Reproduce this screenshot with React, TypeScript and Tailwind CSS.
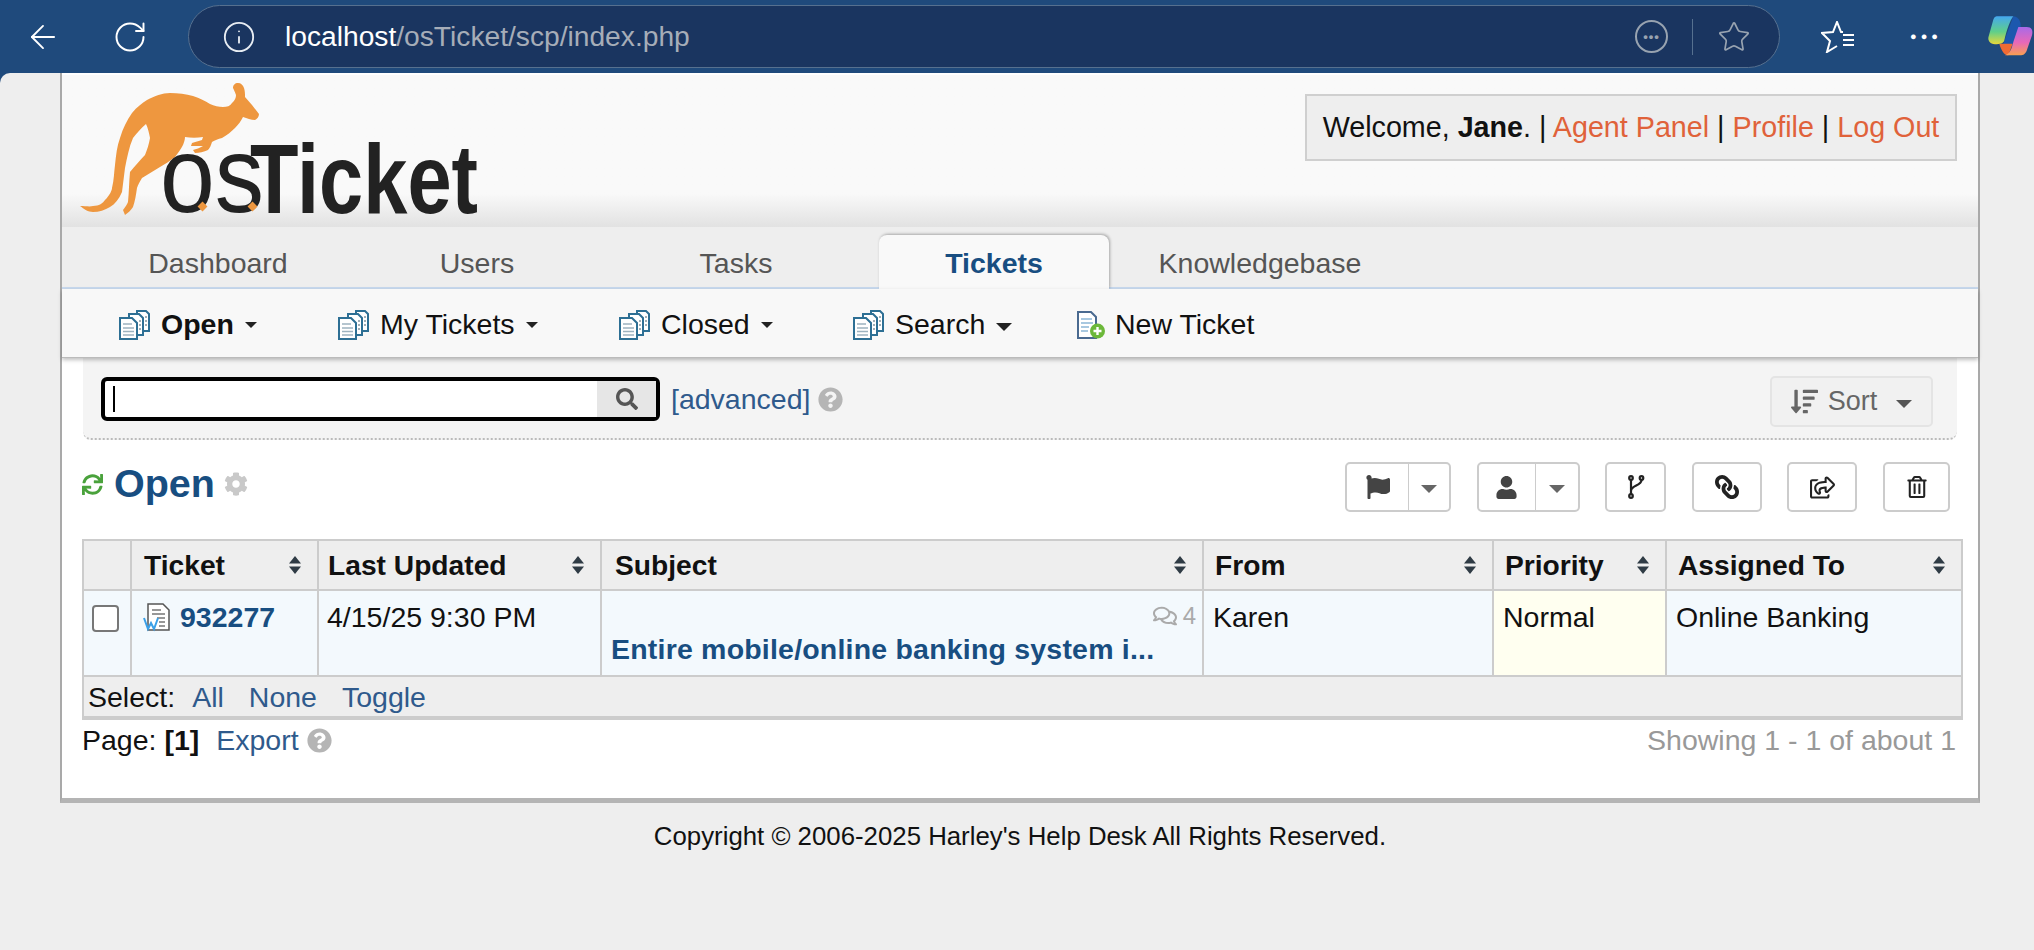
import { ArrowLeft, Info, RotateCw, Star } from "lucide-react";
import { FaCog, FaFlag, FaLink, FaQuestionCircle, FaRegComments, FaRegShareSquare, FaRegTrashAlt, FaSearch, FaSortAmountDown, FaSync, FaUser } from "react-icons/fa";

const columns = [
    { label: "", width: "w-[48px]", pad: "" },
    { label: "Ticket", width: "w-[187px]", pad: "pl-[12px]" },
    { label: "Last Updated", width: "w-[283px]", pad: "pl-[9px]" },
    { label: "Subject", width: "w-[602px]", pad: "pl-[13px]" },
    { label: "From", width: "w-[290px]", pad: "pl-[11px]" },
    { label: "Priority", width: "w-[173px]", pad: "pl-[11px]" },
    { label: "Assigned To", width: "w-[296px]", pad: "pl-[11px]" },
];

// Small stack-of-pages icon used in the sub navigation
function PagesIcon() {
    return (
        <svg width="33" height="31" viewBox="0 0 33 31" className="shrink-0">
            <path d="M19 2h9l3 3v17H19z" fill="#fff" stroke="#2d6f94" strokeWidth="2" />
            <path d="M11 5h10l4 4v17H11z" fill="#fff" stroke="#2d6f94" strokeWidth="2" />
            <path d="M2 9h12l5 5v16H2z" fill="#fff" stroke="#2d6f94" strokeWidth="2" />
            <path d="M5 15h9M5 19h11M5 22.500h11M5 26h11" stroke="#9db3c0" strokeWidth="1.5" />
            <path d="M21 12h2M21 16h2M21 20h2M27 8h2M27 12h2M27 16h2" stroke="#47606e" strokeWidth="1.2" />
        </svg>
    );
}

function SortArrows() {
    return (
        <svg width="14" height="20" viewBox="0 0 14 20" className="shrink-0">
            <path d="M7 1l6 7.5H1z" fill="#2f3b45" />
            <path d="M7 19l6-7.5H1z" fill="#2f3b45" />
        </svg>
    );
}

function Caret({ className }: { className: string }) {
    return <span className={`inline-block border-x-[6px] border-t-[6px] border-x-transparent ${className}`} />;
}

function ForkIcon() {
    return (
        <svg width="18" height="24" viewBox="0 0 18 24" fill="none" stroke="#222" strokeWidth="2.2">
            <circle cx="4" cy="3" r="1.800" />
            <circle cx="14.500" cy="3" r="1.800" />
            <circle cx="4" cy="21" r="1.800" />
            <path d="M4 5v14M14.500 5c0 6-10.500 5-10.500 11" />
        </svg>
    );
}

function Logo() {
    return (
        <svg width="400" height="136" viewBox="80 81 400 136" className="shrink-0 overflow-visible">
            <path
                fill="#ee973f"
                d="M80 206C85 206 90 207 93 206C99 206 103 203 105 200C110 195 112 190 112 188C114 180 114 172 115 165C116 155 117 146 120 138C123 128 127 120 132 113C137 107 142 103 147 100C155 96 162 93 170 93C178 93 186 94 193 96C200 98 205 101 210 104C214 106 219 107 223 107C227 107 230 106 232 103C235 100 236 98 236 95C235 92 234 90 233 88C233 85 235 83 238 83C241 83 243 85 244 88C245 91 245 94 245 97L252 105L259 114C259 117 257 119 255 120C251 120 247 118 243 117C241 121 238 125 235 128C231 132 227 135 222 138C218 139 215 140 212 142C211 145 210 148 208 150C204 152 199 153 195 153L193 150C196 149 200 148 203 146L191 146L192 143C195 142 199 141 202 140L203 137C197 138 191 138 185 137C185 140 184 142 183 145C181 149 178 153 175 157C170 161 165 164 160 167C154 171 148 174 142 178C140 181 138 185 137 188C136 195 135 201 133 207C131 210 128 213 125 215L123 210C125 207 127 205 128 202C129 192 129 182 130 172C135 166 140 160 145 155C147 150 149 144 150 138C149 133 148 128 146 124C141 128 137 133 133 138C129 147 127 158 125 168C124 176 123 184 122 192C119 199 115 204 110 207C105 210 99 212 93 212C88 212 84 209 80 206Z"
            />
            <text x="160" y="212" fontFamily="'Liberation Sans', sans-serif" fontSize="108" fill="#222" textLength="104" lengthAdjust="spacingAndGlyphs">os</text>
            <rect x="199" y="203" width="7" height="7" fill="#ee973f" transform="rotate(45 202.500 206.500)" />
            <rect x="249" y="203" width="7" height="7" fill="#ee973f" transform="rotate(45 252.500 206.500)" />
            <text x="250" y="213" fontFamily="'Liberation Sans', sans-serif" fontWeight="700" fontSize="98" fill="#222" textLength="228" lengthAdjust="spacingAndGlyphs">Ticket</text>
        </svg>
    );
}

function CopilotLogo() {
    return (
        <svg width="64" height="60" viewBox="0 0 192 180">
            <defs>
                <linearGradient id="cpa" x1="0" y1="0" x2="0" y2="1">
                    <stop offset="0" stopColor="#45a8ee" />
                    <stop offset="0.55" stopColor="#5fcf8a" />
                    <stop offset="1" stopColor="#e8d83a" />
                </linearGradient>
                <linearGradient id="cpb" x1="0" y1="0" x2="0" y2="1">
                    <stop offset="0" stopColor="#a86ae8" />
                    <stop offset="0.55" stopColor="#e868b8" />
                    <stop offset="1" stopColor="#f8a050" />
                </linearGradient>
            </defs>
            <path d="M130 28C150 30 155 50 150 70L130 120L100 110Z" fill="#1c58ae" />
            <path d="M88 110H128L115 145C105 145 95 135 88 110Z" fill="#ee6a34" />
            <path d="M80 28H130C120 40 110 70 103 100C100 110 90 112 75 112C60 112 52 100 56 88L68 45C70 35 74 28 80 28Z" fill="url(#cpa)" />
            <path d="M145 60H170C185 60 190 70 186 85L172 125C168 140 160 145 150 145H105C120 140 125 125 130 105L140 75Z" fill="url(#cpb)" />
        </svg>
    );
}

function BrowserBar() {
    return (
        <div className="h-[73px] flex items-center bg-[#1f4a7c] text-white">
            <ArrowLeft size={38} strokeWidth={1.2} className="ml-[24px] shrink-0" />
            <RotateCw size={36} strokeWidth={1.3} className="ml-[50px] shrink-0" />
            <div className="ml-[40px] w-[1592px] h-[63px] flex items-center rounded-full border border-[#56708f] bg-[#1a3560] pl-[33px] pr-[28px]">
                <Info size={34} strokeWidth={1.3} className="shrink-0 text-[#e8edf3]" />
                <span className="ml-[29px] text-[28.2px] text-[#a6adb8]">
                    <span className="text-white">localhost</span>/osTicket/scp/index.php
                </span>
                <div className="ml-auto flex items-center">
                    <span className="w-[33px] h-[33px] rounded-full border-2 border-[#98a3b0] flex items-center justify-center text-[#98a3b0] text-[13px] leading-none tracking-[1px] font-bold">•••</span>
                    <span className="ml-[24px] w-px h-[36px] bg-[#56708f]" />
                    <Star size={34} strokeWidth={1.2} className="ml-[24px] text-[#98a3b0]" />
                </div>
            </div>
            <div className="ml-[41px] flex-1 flex items-center">
                <svg width="34" height="32" viewBox="0 0 34 32" fill="none" stroke="#fff" strokeWidth="2">
                    <path d="M22 11h-2L16 1l-4 10-11 1 8 8-3 11 10-6" />
                    <path d="M22 14h11M22 19h11M22 24h11" />
                </svg>
                <span className="ml-[55px] text-[11px] leading-none tracking-[4px]">●●●</span>
                <span className="ml-auto"><CopilotLogo /></span>
            </div>
        </div>
    );
}

function NavItem({ label, className, bold, caret = "border-t-[#222]" }: { label: string; className: string; bold?: boolean; caret?: string }) {
    return (
        <div className={`flex items-center ${className}`}>
            <PagesIcon />
            <span className={`ml-[10px] text-[28.5px] ${bold ? "font-bold" : ""}`}>{label}</span>
            <Caret className={`ml-[11px] ${caret}`} />
        </div>
    );
}

function ActionButton({ children, className }: { children: React.ReactNode; className: string }) {
    return (
        <div className={`h-[50px] flex items-center justify-center rounded-[5px] border-2 border-[#ccc] bg-white text-[#222] ${className}`}>
            {children}
        </div>
    );
}

function SplitButton({ children, className, first, second }: { children: React.ReactNode; className: string; first: string; second: string }) {
    return (
        <div className={`h-[50px] flex rounded-[5px] border-2 border-[#ccc] bg-white text-[#444] ${className}`}>
            <div className={`flex items-center justify-center border-r border-[#ccc] ${first}`}>{children}</div>
            <div className={`flex items-center justify-center pt-[4px] ${second}`}><Caret className="border-t-[#666] border-x-[8px] border-t-[8px]" /></div>
        </div>
    );
}

export default function App() {
    return (
        <div className="h-[950px] overflow-hidden bg-[#1f4a7c] font-['Liberation_Sans',sans-serif] text-[#111]">
            <BrowserBar />

            <div className="h-[877px] bg-[#eeeeee] rounded-tl-[10px] overflow-hidden">
                <div className="ml-[60px] w-[1920px] h-[730px] bg-white border-x-2 border-b-[5px] border-[#b4b4b4] border-x-[#a9a9a9]">

                    {/* header */}
                    <div className="h-[154px] flex items-start justify-between pl-[18px] pr-[21px] bg-gradient-to-b from-[#f9f9f9] from-[78%] to-[#e2e2e2] border-t-2 border-white">
                        <div className="mt-[6px]"><Logo /></div>
                        <div className="mt-[19px] h-[67px] w-[652px] flex items-center justify-center bg-[#eeeeee] border-2 border-[#cfcfcf] text-[28.7px] whitespace-nowrap">
                            <span>Welcome, <b>Jane</b>. | <a className="text-[#e0623a]">Agent Panel</a> | <a className="text-[#e0623a]">Profile</a> | <a className="text-[#e0623a]">Log Out</a></span>
                        </div>
                    </div>

                    {/* tabs */}
                    <div className="h-[62px] flex items-end gap-[27px] pl-[40px] bg-[#eeeeee] border-b-2 border-[#c8d9ee] text-[28.5px] text-[#555]">
                        <div className="w-[232px] h-[47px] flex items-center justify-center">Dashboard</div>
                        <div className="w-[232px] h-[47px] flex items-center justify-center">Users</div>
                        <div className="w-[232px] h-[47px] flex items-center justify-center">Tasks</div>
                        <div className="w-[230px] mr-[2px] h-[54px] -mb-[2px] pt-[3px] flex items-center justify-center rounded-t-[8px] bg-[#f9f9f9] font-bold text-[#184e81] shadow-[1px_-1px_3px_rgba(0,0,0,0.3)]">Tickets</div>
                        <div className="w-[244px] h-[47px] flex items-center justify-center">Knowledgebase</div>
                    </div>

                    {/* sub navigation */}
                    <div className="relative h-[69px] flex items-center pl-[56px] pt-[3px] bg-[#f8f8f8] border-b border-[#bbb] shadow-[0_2px_4px_rgba(0,0,0,0.25)]">
                        <NavItem label="Open" bold className="w-[219px]" />
                        <NavItem label="My Tickets" className="w-[281px]" />
                        <NavItem label="Closed" className="w-[234px]" />
                        <NavItem label="Search" caret="border-x-[8px] border-t-[8px] mt-[5px] border-t-[#222]" className="w-[224px]" />
                        <div className="flex items-center">
                            <svg width="30" height="30" viewBox="0 0 30 30" className="shrink-0">
                                <path d="M2 2h13l5 5v21H2z" fill="#fff" stroke="#4a6a90" strokeWidth="2" />
                                <path d="M5 9h11M5 13h12M5 17h8M5 21h7" stroke="#a8c8e0" strokeWidth="1.8" />
                                <circle cx="21.500" cy="21" r="7.500" fill="#6cb83a" />
                                <path d="M21.500 17v8M17.500 21h8" stroke="#fff" strokeWidth="2.4" />
                            </svg>
                            <span className="ml-[9px] text-[28.5px]">New Ticket</span>
                        </div>
                    </div>

                    {/* search panel */}
                    <div className="mx-[21px] h-[82px] flex items-start justify-between pl-[18px] pr-[24px] pt-[19px] bg-[#f4f4f4] border-b-2 border-dotted border-[#bbb] rounded-b-[8px]">
                        <div className="flex items-center">
                            <div className="w-[559px] h-[44px] flex items-stretch justify-between rounded-[6px] border-[4px] border-black bg-white">
                                <span className="ml-[8px] my-[5px] w-[2px] bg-black" />
                                <div className="w-[59px] flex items-center justify-center bg-[#e6e6e6] text-[#555]"><FaSearch size={22} /></div>
                            </div>
                            <a className="ml-[11px] text-[28.5px] text-[#2f5a8c]">[advanced]</a>
                            <FaQuestionCircle size={25} className="ml-[8px] text-[#b5b5b5]" />
                        </div>
                        <div className="-mt-[1px] w-[163px] h-[51px] flex items-center justify-center rounded-[5px] border-2 border-[#e4e4e4] bg-[#f1f1f1] text-[#666] text-[27px]">
                            <FaSortAmountDown size={27} />
                            <span className="ml-[10px]">Sort</span>
                            <Caret className="ml-[19px] mt-[5px] border-t-[#555] border-x-[8px] border-t-[8px]" />
                        </div>
                    </div>

                    {/* title + actions */}
                    <div className="h-[99px] flex items-start justify-between pl-[20px] pr-[28px] pt-[22px]">
                        <div className="flex items-center h-[44px]">
                            <FaSync size={21} className="text-[#4aa23c]" />
                            <span className="ml-[11px] text-[39.5px] font-bold text-[#184e81]">Open</span>
                            <FaCog size={24} className="ml-[9px] text-[#c9c9c9]" />
                        </div>
                        <div className="flex gap-[25.6px]">
                            <SplitButton className="w-[106px]" first="w-[62px]" second="flex-1"><FaFlag size={24} /></SplitButton>
                            <SplitButton className="w-[103px]" first="w-[57px]" second="flex-1"><FaUser size={23} /></SplitButton>
                            <ActionButton className="w-[61px]"><ForkIcon /></ActionButton>
                            <ActionButton className="w-[70px]"><FaLink size={24} className="-scale-x-100" /></ActionButton>
                            <ActionButton className="w-[70px]"><FaRegShareSquare size={25} /></ActionButton>
                            <ActionButton className="w-[67px]"><FaRegTrashAlt size={22} /></ActionButton>
                        </div>
                    </div>

                    {/* ticket table */}
                    <table className="ml-[20px] w-[1879px] table-fixed border-collapse text-[28.5px]">
                        <thead>
                            <tr className="h-[50px] bg-[#eeeeee]">
                                {columns.map((col) => (
                                    <th key={col.label} className={`${col.width} border-2 border-[#ccc] p-0 text-left`}>
                                        {col.label && (
                                            <div className={`flex items-center justify-between pr-[15px] text-[28.2px] ${col.pad}`}>
                                                <span>{col.label}</span>
                                                <SortArrows />
                                            </div>
                                        )}
                                    </th>
                                ))}
                            </tr>
                        </thead>
                        <tbody>
                            <tr className="h-[86px] bg-[#f3f9fd] align-top">
                                <td className="border-2 border-[#ccc] pl-[8px] pt-[14px]">
                                    <span className="block w-[27px] h-[27px] rounded-[4px] border-2 border-[#777] bg-white" />
                                </td>
                                <td className="border-2 border-[#ccc] pl-[11px] pt-[5px]">
                                    <div className="flex items-center">
                                        <svg width="28" height="29" viewBox="0 0 28 29" className="shrink-0">
                                            <path d="M5 1h15l6 6v20H5z" fill="#fff" stroke="#555" strokeWidth="1.5" />
                                            <path d="M9 7h9M9 11h13M14 15h8M16 19h6M16 23h6" stroke="#777" strokeWidth="1.4" />
                                            <path d="M1 15l4 11 3-6 3 6 4-11" fill="none" stroke="#3aa0e8" strokeWidth="2" />
                                        </svg>
                                        <b className="ml-[9px] text-[#184e81]">932277</b>
                                    </div>
                                </td>
                                <td className="border-2 border-[#ccc] pl-[8px] pt-[5px]">4/15/25 9:30 PM</td>
                                <td className="border-2 border-[#ccc] pl-[9px] pr-[6px] pt-[9px]">
                                    <div className="flex items-center justify-end h-[31px] text-[24px] text-[#aaa]">
                                        <FaRegComments size={24} />
                                        <span className="ml-[6px]">4</span>
                                    </div>
                                    <b className="block text-[#184e81] leading-[36px] tracking-[0.2px] whitespace-nowrap">Entire mobile/online banking system i...</b>
                                </td>
                                <td className="border-2 border-[#ccc] pl-[9px] pt-[5px]">Karen</td>
                                <td className="border-2 border-[#ccc] pl-[9px] pt-[5px] bg-[#fffff0]">Normal</td>
                                <td className="border-2 border-[#ccc] pl-[9px] pt-[5px]">Online Banking</td>
                            </tr>
                            <tr className="h-[42px] bg-[#eeeeee]">
                                <td colSpan={7} className="border-2 border-b-[4px] border-[#ccc] pl-[4px] py-0 leading-[36px]">
                                    <span>Select:</span>
                                    <a className="ml-[17px] text-[#2f5a8c]">All</a>
                                    <a className="ml-[25px] text-[#2f5a8c]">None</a>
                                    <a className="ml-[25px] text-[#2f5a8c]">Toggle</a>
                                </td>
                            </tr>
                        </tbody>
                    </table>

                    {/* pagination */}
                    <div className="ml-[20px] w-[1874px] flex items-center justify-between text-[28.5px] -mt-[1px]">
                        <div className="flex items-center">
                            <span>Page: <b>[1]</b></span>
                            <a className="ml-[17px] text-[#2f5a8c]">Export</a>
                            <FaQuestionCircle size={25} className="ml-[8px] text-[#b5b5b5]" />
                        </div>
                        <span className="text-[#999]">Showing 1 - 1 of about 1</span>
                    </div>
                </div>

                <p className="mt-[14px] text-center text-[25.8px] pl-[6px]">Copyright © 2006-2025 Harley's Help Desk All Rights Reserved.</p>
            </div>
        </div>
    );
}
